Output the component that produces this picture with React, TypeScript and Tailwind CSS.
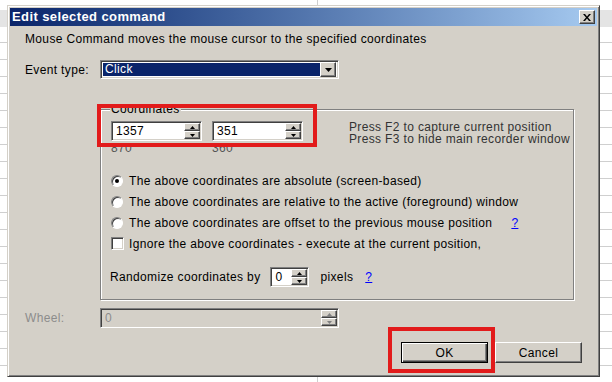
import React from "react";

const raised =
  "border border-t-white border-l-white border-r-[#404040] border-b-[#404040] shadow-[inset_-1px_-1px_#808080]";
const sunken =
  "border border-t-[#808080] border-l-[#808080] border-r-white border-b-white shadow-[inset_1px_1px_#404040,inset_-1px_-1px_#d4d0c8]";

function Arrow({ up, grey, size = 7 }: { up?: boolean; grey?: boolean; size?: number }) {
  const h = Math.ceil(size / 2);
  return (
    <svg width={size} height={h} viewBox={`0 0 ${size} ${h}`}>
      <polygon
        points={up ? `${size / 2},0 ${size},${h} 0,${h}` : `0,0 ${size},0 ${size / 2},${h}`}
        fill={grey ? "#808080" : "#000"}
      />
    </svg>
  );
}

function SpinBox({ value, width, disabled }: { value: string; width: string; disabled?: boolean }) {
  return (
    <div className={`flex h-[20px] ${width} ${sunken} ${disabled ? "bg-[#d4d0c8]" : "bg-white"} p-[1px]`}>
      <div className={`flex-1 pl-[3px] text-[12px] leading-[16px] ${disabled ? "text-[#8c8c8c]" : "text-black"}`}>
        {value}
      </div>
      <div className="flex w-[16px] flex-col">
        <div className={`flex h-[8px] items-center justify-center bg-[#d4d0c8] ${raised}`}>
          <Arrow up grey={disabled} size={5} />
        </div>
        <div className={`flex h-[8px] items-center justify-center bg-[#d4d0c8] ${raised}`}>
          <Arrow grey={disabled} size={5} />
        </div>
      </div>
    </div>
  );
}

function Radio({ checked, label, help }: { checked?: boolean; label: string; help?: boolean }) {
  return (
    <div className="flex h-[21px] items-center">
      <div className="flex h-[12px] w-[12px] items-center justify-center rounded-full border border-t-[#808080] border-l-[#808080] border-r-white border-b-white bg-white shadow-[inset_1px_1px_#404040]">
        {checked && <div className="h-[4px] w-[4px] rounded-full bg-black" />}
      </div>
      <span className="ml-[6px]">{label}</span>
      {help && <span className="ml-[19px] text-[#0000ff] underline">?</span>}
    </div>
  );
}

function SheetRow({ h }: { h: string }) {
  return (
    <div className={`flex ${h}`}>
      <div className="w-[318px] border-r border-b border-[#cfcfcf]" />
      <div className="flex-1 border-b border-[#cfcfcf]" />
    </div>
  );
}

export default function App() {
  const rows = Array.from({ length: 20 });
  return (
    <div className="relative h-[382px] w-[612px] overflow-hidden bg-white font-['Liberation_Sans',Arial,sans-serif] text-[12px] tracking-[0.35px] text-black">
      {/* spreadsheet behind the dialog */}
      <div className="flex flex-col">
        <div className="flex h-[10px]">
          <div className="w-[318px] border-r border-[#cfcfcf]" />
        </div>
        <div className="h-[17px] bg-[#e4e4e4]" />
        <SheetRow h="h-[16px]" />
        {rows.map((_, i) => (
          <SheetRow key={i} h="h-[17px]" />
        ))}
      </div>

      {/* dialog window */}
      <div className="absolute left-[7px] top-[5px] flex h-[372px] w-[593px] flex-col border border-t-[#d4d0c8] border-l-[#d4d0c8] border-r-[#404040] border-b-[#404040] bg-[#d4d0c8] p-[2px] shadow-[inset_1px_1px_#fff,inset_-1px_-1px_#808080]">
        <div className="flex h-[18px] items-center bg-gradient-to-r from-[#0a246a] to-[#a6caf0] pl-[2px]">
          <span className="flex-1 text-[13px] font-bold tracking-[0.4px] text-white">Edit selected command</span>
          <div className={`mr-[2px] flex h-[14px] w-[16px] items-center justify-center bg-[#d4d0c8] ${raised}`}>
            <svg width="8" height="7" viewBox="0 0 8 7">
              <path d="M0 0h2l2 2.5L6 0h2L5 3.5 8 7H6L4 4.5 2 7H0l3-3.5z" fill="#000" />
            </svg>
          </div>
        </div>

        <div className="flex flex-col pl-[15px] pr-[15px]">
          <div className="mt-[6px] leading-[14px]">Mouse Command moves the mouse cursor to the specified coordinates</div>

          <div className="mt-[14px] flex h-[19px] items-center">
            <span className="w-[75px]">Event type:</span>
            <div className={`flex h-[19px] w-[239px] ${sunken} bg-white p-[2px]`}>
              <div className="flex-1 bg-[#0a246a] pl-[2px] leading-[13px] text-white">Click</div>
              <div className={`-my-[1px] flex w-[16px] items-center justify-center bg-[#d4d0c8] ${raised}`}>
                <Arrow />
              </div>
            </div>
          </div>

          <div className="relative ml-[75px] mt-[30px] h-[191px] w-[474px] border border-[#808080] pl-[10px] pt-[11px] shadow-[inset_1px_1px_#fff,1px_1px_#fff]">
            <span className="absolute -top-[7px] left-[9px] bg-[#d4d0c8] px-[1px] leading-[12px]">Coordinates</span>
            <div className="flex">
              <div className="flex flex-col">
                <SpinBox value="1357" width="w-[91px]" />
                <span className="mt-[2px] leading-[11px] text-[#555]">870</span>
              </div>
              <div className="ml-[10px] flex flex-col">
                <SpinBox value="351" width="w-[91px]" />
                <span className="mt-[2px] leading-[11px] text-[#555]">360</span>
              </div>
              <div className="ml-[46px] flex flex-col leading-[12px] text-[#333]">
                <span>Press F2 to capture current position</span>
                <span>Press F3 to hide main recorder window</span>
              </div>
            </div>

            <div className="mt-[16px] flex flex-col">
              <Radio checked label="The above coordinates are absolute (screen-based)" />
              <Radio label="The above coordinates are relative to the active (foreground) window" />
              <Radio help label="The above coordinates are offset to the previous mouse position" />
              <div className="flex h-[21px] items-center">
                <div className={`h-[13px] w-[13px] bg-white ${sunken}`} />
                <span className="ml-[5px]">Ignore the above coordinates - execute at the current position,</span>
              </div>
            </div>

            <div className="-ml-[1px] mt-[13px] flex h-[20px] items-center">
              <span>Randomize coordinates by</span>
              <div className="ml-[10px]">
                <SpinBox value="0" width="w-[39px]" />
              </div>
              <span className="ml-[11px]">pixels</span>
              <span className="ml-[12px] text-[#0000ff] underline">?</span>
            </div>
          </div>

          <div className="mt-[8px] flex h-[20px] items-center">
            <span className="w-[75px] text-[#8c8c8c]">Wheel:</span>
            <SpinBox value="0" width="w-[239px]" disabled />
          </div>

          <div className="mt-[14px] flex justify-end">
            <div className="flex h-[21px] w-[87px] items-center justify-center border border-black bg-[#d4d0c8] shadow-[inset_1px_1px_#fff,inset_-1px_-1px_#404040,inset_-2px_-2px_#808080]">
              OK
            </div>
            <div className={`ml-[7px] flex h-[21px] w-[87px] items-center justify-center bg-[#d4d0c8] ${raised}`}>
              Cancel
            </div>
          </div>
        </div>
      </div>

      {/* red annotation boxes */}
      <div className="absolute left-[97px] top-[104px] h-[43px] w-[220px] border-[4px] border-[#e21b1b]" />
      <div className="absolute left-[388px] top-[327px] h-[46px] w-[107px] border-[4px] border-[#e21b1b]" />
    </div>
  );
}
